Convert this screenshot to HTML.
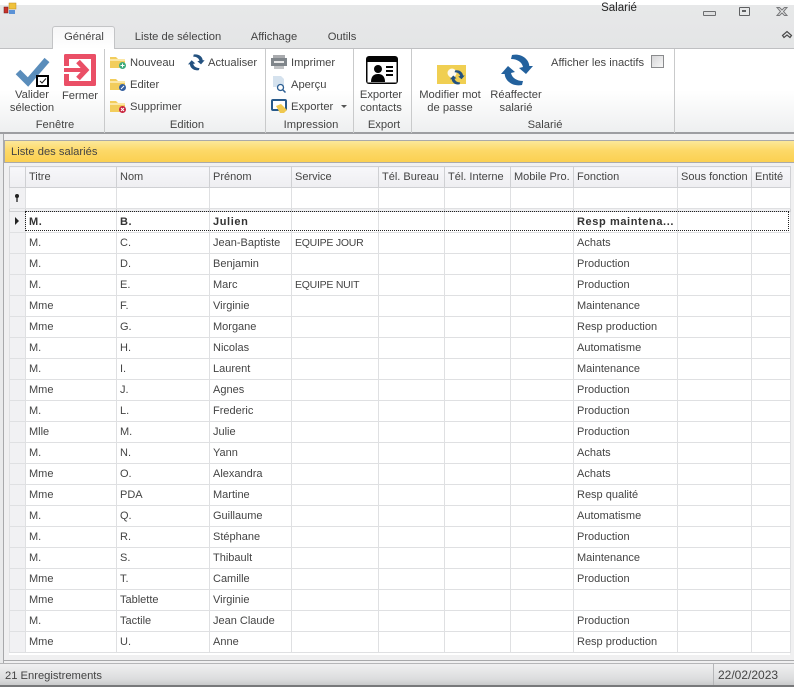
<!DOCTYPE html>
<html lang="fr"><head><meta charset="utf-8"><title>Salarié</title>
<style>
html,body{margin:0;padding:0}
body{width:794px;height:687px;position:relative;overflow:hidden;background:#e9eaeb;font-family:"Liberation Sans",sans-serif;font-size:11.2px;color:#444}
.a{position:absolute;white-space:nowrap}
.c{position:absolute;white-space:nowrap;text-align:center;line-height:13px;transform:translateX(-50%)}
.sep{position:absolute;top:49px;height:84px;width:1px;background:#c9cacb}
.glabel{position:absolute;top:118px;text-align:center;transform:translateX(-50%);white-space:nowrap;line-height:14px}
svg{position:absolute;overflow:visible}
table{position:absolute;left:9px;top:166px;width:781px;border-collapse:collapse;table-layout:fixed;font-size:11px;color:#444}
td{height:20px;padding:0 0 0 3px;border:1px solid #dfe0e2;white-space:nowrap;overflow:hidden;box-sizing:border-box}
tr{height:21px}
td:first-child{background:#f1f1f3;padding:0}
tr.h td{background:linear-gradient(#f7f7fa,#eeeef1);border-color:#cfd0d3;height:21px}
tr.f td{background:#fff;height:21px}
tr.f td:first-child{background:#f1f1f3}
tr.g td{height:3px;background:#f0f0f2;border-color:#cfd0d3;padding:0;line-height:0;font-size:0}
tr.g{height:3px}
tr.s td{font-weight:bold;letter-spacing:.6px;color:#333}
.u{font-size:10.5px;letter-spacing:-.25px}
</style></head>
<body>
<!-- title bar -->
<div class="a" style="left:0;top:0;width:794px;height:6px;background:#fff"></div>
<div class="a" style="left:0;top:5px;width:794px;height:43px;background:linear-gradient(#e7e8e9,#e4e5e6)"></div>
<svg style="left:3px;top:2px" width="14" height="13"><rect x="6" y="1" width="7" height="6" fill="#f0c23c" stroke="#c08a20" stroke-width=".5"/><rect x="1" y="5" width="4" height="6" fill="#c8312a" stroke="#6d1a16" stroke-width=".5"/><rect x="6" y="8" width="6" height="4" fill="#5b92d6"/></svg>
<div class="c" style="left:619px;top:2px;color:#222;font-size:11.5px">Salarié</div>
<div class="a" style="left:703px;top:11px;width:11px;height:3px;border:1px solid #6d6e70;border-radius:1px;background:#dfe0e1"></div>
<div class="a" style="left:739px;top:7px;width:9px;height:7px;border:1px solid #5f6062;border-radius:1px"></div>
<div class="a" style="left:742px;top:10px;width:4px;height:2px;background:#5f6062"></div>
<svg style="left:775px;top:6px" width="14" height="11" fill="none" stroke="#77787a"><path d="M2 1.500h2.500L7 4l2.500-2.500H12L8.500 5.500 12 9.500H9.500L7 7 4.500 9.500H2l3.500-4z"/></svg>
<svg style="left:781px;top:30px" width="12" height="10" fill="none" stroke="#4a4a4a" stroke-width="1.200"><path d="M1.500 5.500 6 1.500l4.500 4-1.500 2L6 5 3 7.500z"/></svg>
<!-- tabs -->
<div class="a" style="left:52px;top:26px;width:63px;height:23px;background:linear-gradient(#f6f6f7,#fff);border:1px solid #c3c4c6;border-bottom:0;border-radius:3px 3px 0 0;box-sizing:border-box;z-index:2"></div>
<div class="c" style="left:84px;top:31px;z-index:3">Général</div>
<div class="c" style="left:178px;top:31px">Liste de sélection</div>
<div class="c" style="left:274px;top:31px">Affichage</div>
<div class="c" style="left:342px;top:31px">Outils</div>
<!-- ribbon -->
<div class="a" style="left:0;top:48px;width:794px;height:86px;background:linear-gradient(#fff 0,#fff 50%,#eeeff0 100%);border-top:1px solid #bfc0c2;border-bottom:2px solid #9d9ea1;box-sizing:border-box"></div>
<div class="sep" style="left:104px"></div><div class="sep" style="left:265px"></div><div class="sep" style="left:353px"></div><div class="sep" style="left:411px"></div><div class="sep" style="left:674px"></div>
<!-- valider -->
<svg style="left:14px;top:55px" width="38" height="32"><path d="M4 17 L14 27 L33 5" fill="none" stroke="#5a8dbb" stroke-width="6.500"/><rect x="23" y="21" width="11" height="10" fill="#fff" stroke="#000" stroke-width="2"/><path d="M26 26l2 2 4-4.500" fill="none" stroke="#222" stroke-width="1.100"/></svg>
<div class="c" style="left:32px;top:89px">Valider<br>sélection</div>
<!-- fermer -->
<svg style="left:64px;top:54px" width="32" height="32"><path d="M0 12V1.500A1.500 1.500 0 0 1 1.500 0h29A1.500 1.500 0 0 1 32 1.500v29a1.500 1.500 0 0 1-1.500 1.500h-29A1.500 1.500 0 0 1 0 30.500V20h5v7h22V5H5v7z" fill="#ea4f66"/><path d="M0 16h20" stroke="#ea4f66" stroke-width="4"/><path d="M14 7.500l8 8.500-8 8.500" fill="none" stroke="#ea4f66" stroke-width="5"/></svg>
<div class="c" style="left:80px;top:90px">Fermer</div>
<!-- folders -->
<svg style="left:110px;top:55px" width="17" height="15"><path d="M0 2h6l2 2h7v9H0z" fill="#f2cd5c"/><path d="M0 4h15v2H0z" fill="#fbe7a6"/><circle cx="12.500" cy="10.500" r="3.500" fill="#3cab7c"/><path d="M10.500 10.500h4M12.500 8.500v4" stroke="#fff"/></svg>
<svg style="left:110px;top:77px" width="17" height="15"><path d="M0 2h6l2 2h7v9H0z" fill="#f2cd5c"/><path d="M0 4h15v2H0z" fill="#fbe7a6"/><circle cx="12.500" cy="10.500" r="3.500" fill="#35609f"/><path d="M11 12l3-3" stroke="#fff"/></svg>
<svg style="left:110px;top:99px" width="17" height="15"><path d="M0 2h6l2 2h7v9H0z" fill="#f2cd5c"/><path d="M0 4h15v2H0z" fill="#fbe7a6"/><circle cx="12.500" cy="10.500" r="3.500" fill="#c9253f"/><path d="M11 9l3 3M14 9l-3 3" stroke="#fff"/></svg>
<div class="a" style="left:130px;top:57px">Nouveau</div>
<div class="a" style="left:130px;top:79px">Editer</div>
<div class="a" style="left:130px;top:101px">Supprimer</div>
<!-- actualiser -->
<svg style="left:188px;top:54px" width="16" height="16" fill="#23517f"><g transform="scale(.52)"><path d="M7 12 0 20h3.700C4 27 12 33 21 31l1-4c-6 0-11-3-12-8l4-1z"/><path transform="rotate(180 16 16)" d="M7 12 0 20h3.700C4 27 12 33 21 31l1-4c-6 0-11-3-12-8l4-1z"/></g></svg>
<div class="a" style="left:208px;top:57px">Actualiser</div>
<!-- impression -->
<svg style="left:271px;top:55px" width="17" height="15"><rect x="2" y="0" width="12" height="3" fill="#a9abae"/><rect x="0" y="3" width="16" height="8" fill="#80868b"/><rect x="3" y="6" width="10" height="2" fill="#e8e8e8"/><rect x="3" y="11" width="10" height="3" fill="#c0c2c4"/></svg>
<svg style="left:272px;top:76px" width="16" height="17"><path d="M1 0h8l3 3v8H1z" fill="#d5e2ee"/><circle cx="8.500" cy="11.500" r="3" fill="#fff" stroke="#2d5f93" stroke-width="1.300"/><path d="M10.500 13.500l3 3" stroke="#2d5f93" stroke-width="1.500"/></svg>
<svg style="left:271px;top:99px" width="17" height="15"><rect x="1" y="1" width="14" height="10" rx="1" fill="#fff" stroke="#27598a" stroke-width="2"/><path d="M5 7l5-2 6 6-3 3H9z" fill="#efc84f"/></svg>
<div class="a" style="left:291px;top:57px">Imprimer</div>
<div class="a" style="left:291px;top:79px">Aperçu</div>
<div class="a" style="left:291px;top:101px">Exporter</div>
<div class="a" style="left:341px;top:105px;width:0;height:0;border-left:3px solid transparent;border-right:3px solid transparent;border-top:3px solid #555"></div>
<!-- exporter contacts -->
<svg style="left:366px;top:56px" width="32" height="28"><rect width="32" height="28" rx="3" fill="#050505"/><rect x="1.500" y="6" width="29" height="20.500" fill="#fff"/><circle cx="12" cy="13" r="4" fill="#050505"/><path d="M5 26c0-6 3-8 7-8s7 2 7 8z" fill="#050505"/><path d="M20 11h7M20 15h7M20 19h7" stroke="#050505" stroke-width="2"/></svg>
<div class="c" style="left:381px;top:89px">Exporter<br>contacts</div>
<!-- modifier mot de passe -->
<svg style="left:437px;top:65px" width="30" height="20"><rect width="29" height="19" fill="#f0cf52"/><circle cx="15" cy="8" r="4.500" fill="#fff" opacity=".9"/><g transform="translate(13 5) scale(.46)" fill="#23517f"><path d="M7 12 0 20h3.700C4 27 12 33 21 31l1-4c-6 0-11-3-12-8l4-1z"/><path transform="rotate(180 16 16)" d="M7 12 0 20h3.700C4 27 12 33 21 31l1-4c-6 0-11-3-12-8l4-1z"/></g></svg>
<div class="c" style="left:450px;top:89px">Modifier mot<br>de passe</div>
<!-- reaffecter -->
<svg style="left:501px;top:54px" width="33" height="33" fill="#23619d"><path d="M7 12 0 20h3.700C4 27 12 33 21 31l1-4c-6 0-11-3-12-8l4-1z"/><path transform="rotate(180 16 16)" d="M7 12 0 20h3.700C4 27 12 33 21 31l1-4c-6 0-11-3-12-8l4-1z"/></svg>
<div class="c" style="left:516px;top:89px">Réaffecter<br>salarié</div>
<div class="a" style="left:551px;top:57px">Afficher les inactifs</div>
<div class="a" style="left:651px;top:55px;width:13px;height:13px;border:1px solid #8a8b8d;box-sizing:border-box;background:linear-gradient(135deg,#d6d6d8,#f7f7f7)"></div>
<div class="glabel" style="left:55px">Fenêtre</div>
<div class="glabel" style="left:187px">Edition</div>
<div class="glabel" style="left:311px">Impression</div>
<div class="glabel" style="left:384px">Export</div>
<div class="glabel" style="left:545px">Salarié</div>
<!-- panel -->
<div class="a" style="left:3px;top:134px;width:791px;height:531px;background:#f0f0f1;border-left:1px solid #a8a9ab;box-sizing:border-box"></div>
<div class="a" style="left:4px;top:140px;width:790px;height:23px;background:linear-gradient(#fce89a 0,#fdd968 45%,#fbd051 100%);border:1px solid #aaa;border-right:0;box-sizing:border-box;padding:4px 0 0 6px;line-height:14px">Liste des salariés</div>
<div class="a" style="left:9px;top:166px;width:781px;height:489px;background:#fff"></div>
<table>
<colgroup><col style="width:16px"><col style="width:91px"><col style="width:93px"><col style="width:82px"><col style="width:87px"><col style="width:66px"><col style="width:66px"><col style="width:63px"><col style="width:104px"><col style="width:74px"><col style="width:39px"></colgroup>
<tr class="h"><td></td><td>Titre</td><td>Nom</td><td>Prénom</td><td>Service</td><td>Tél. Bureau</td><td>Tél. Interne</td><td>Mobile Pro.</td><td>Fonction</td><td>Sous fonction</td><td>Entité</td></tr>
<tr class="f"><td></td><td></td><td></td><td></td><td></td><td></td><td></td><td></td><td></td><td></td><td></td></tr>
<tr class="g"><td></td><td></td><td></td><td></td><td></td><td></td><td></td><td></td><td></td><td></td><td></td></tr>
<tr class="s"><td></td><td>M.</td><td>B.</td><td>Julien</td><td></td><td></td><td></td><td></td><td>Resp maintena...</td><td></td><td></td></tr>
<tr><td></td><td>M.</td><td>C.</td><td>Jean-Baptiste</td><td><span class="u">EQUIPE JOUR</span></td><td></td><td></td><td></td><td>Achats</td><td></td><td></td></tr>
<tr><td></td><td>M.</td><td>D.</td><td>Benjamin</td><td></td><td></td><td></td><td></td><td>Production</td><td></td><td></td></tr>
<tr><td></td><td>M.</td><td>E.</td><td>Marc</td><td><span class="u">EQUIPE NUIT</span></td><td></td><td></td><td></td><td>Production</td><td></td><td></td></tr>
<tr><td></td><td>Mme</td><td>F.</td><td>Virginie</td><td></td><td></td><td></td><td></td><td>Maintenance</td><td></td><td></td></tr>
<tr><td></td><td>Mme</td><td>G.</td><td>Morgane</td><td></td><td></td><td></td><td></td><td>Resp production</td><td></td><td></td></tr>
<tr><td></td><td>M.</td><td>H.</td><td>Nicolas</td><td></td><td></td><td></td><td></td><td>Automatisme</td><td></td><td></td></tr>
<tr><td></td><td>M.</td><td>I.</td><td>Laurent</td><td></td><td></td><td></td><td></td><td>Maintenance</td><td></td><td></td></tr>
<tr><td></td><td>Mme</td><td>J.</td><td>Agnes</td><td></td><td></td><td></td><td></td><td>Production</td><td></td><td></td></tr>
<tr><td></td><td>M.</td><td>L.</td><td>Frederic</td><td></td><td></td><td></td><td></td><td>Production</td><td></td><td></td></tr>
<tr><td></td><td>Mlle</td><td>M.</td><td>Julie</td><td></td><td></td><td></td><td></td><td>Production</td><td></td><td></td></tr>
<tr><td></td><td>M.</td><td>N.</td><td>Yann</td><td></td><td></td><td></td><td></td><td>Achats</td><td></td><td></td></tr>
<tr><td></td><td>Mme</td><td>O.</td><td>Alexandra</td><td></td><td></td><td></td><td></td><td>Achats</td><td></td><td></td></tr>
<tr><td></td><td>Mme</td><td>PDA</td><td>Martine</td><td></td><td></td><td></td><td></td><td>Resp qualité</td><td></td><td></td></tr>
<tr><td></td><td>M.</td><td>Q.</td><td>Guillaume</td><td></td><td></td><td></td><td></td><td>Automatisme</td><td></td><td></td></tr>
<tr><td></td><td>M.</td><td>R.</td><td>Stéphane</td><td></td><td></td><td></td><td></td><td>Production</td><td></td><td></td></tr>
<tr><td></td><td>M.</td><td>S.</td><td>Thibault</td><td></td><td></td><td></td><td></td><td>Maintenance</td><td></td><td></td></tr>
<tr><td></td><td>Mme</td><td>T.</td><td>Camille</td><td></td><td></td><td></td><td></td><td>Production</td><td></td><td></td></tr>
<tr><td></td><td>Mme</td><td>Tablette</td><td>Virginie</td><td></td><td></td><td></td><td></td><td></td><td></td><td></td></tr>
<tr><td></td><td>M.</td><td>Tactile</td><td>Jean Claude</td><td></td><td></td><td></td><td></td><td>Production</td><td></td><td></td></tr>
<tr><td></td><td>Mme</td><td>U.</td><td>Anne</td><td></td><td></td><td></td><td></td><td>Resp production</td><td></td><td></td></tr>
</table>
<div class="a" style="left:25px;top:211px;width:764px;height:20px;border:1px dotted #222;box-sizing:border-box"></div>
<svg style="left:14px;top:194px" width="6" height="8"><circle cx="3" cy="2" r="2" fill="#222"/><path d="M3 3v5" stroke="#222" stroke-width="1.300"/></svg>
<div class="a" style="left:15px;top:217px;width:0;height:0;border-top:4px solid transparent;border-bottom:4px solid transparent;border-left:4px solid #222"></div>
<!-- status -->
<div class="a" style="left:3px;top:660px;width:791px;height:1px;background:#a8a9ab"></div>
<div class="a" style="left:0;top:663px;width:794px;height:24px;background:linear-gradient(#f0f0f1,#dcddde 70%,#c9cacb);border-top:1px solid #b5b6b8;border-bottom:2px solid #77787a;box-sizing:border-box"></div>
<div class="a" style="left:5px;top:670px">21 Enregistrements</div>
<div class="a" style="left:713px;top:664px;width:1px;height:21px;background:#b5b6b8"></div>
<div class="a" style="left:718px;top:668px;font-size:12px">22/02/2023</div>
</body></html>
